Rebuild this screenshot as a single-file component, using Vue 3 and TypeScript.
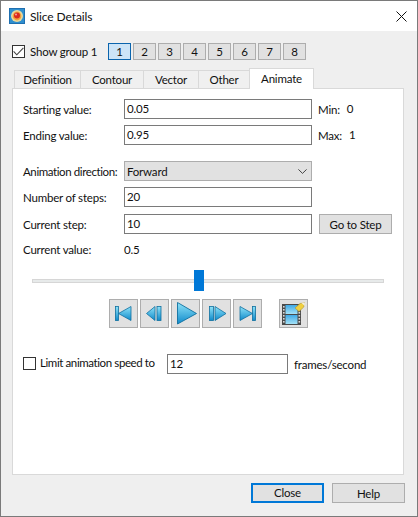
<script setup lang="ts">
const groups: number[] = [1, 2, 3, 4, 5, 6, 7, 8]
const tabs: string[] = ['Definition', 'Contour', 'Vector', 'Other', 'Animate']
</script>

<template>
  <div class="window">
    <div class="titlebar">
      <svg class="app-icon" width="16" height="16" viewBox="0 0 16 16">
        <rect width="16" height="16" fill="#1f6fb0" />
        <rect x="1" y="1" width="14" height="14" fill="#2f8fcf" />
        <circle cx="8" cy="8" r="6" fill="#e8d9a0" />
        <circle cx="8" cy="8" r="4.4" fill="#f2a13a" />
        <circle cx="8" cy="7.6" r="3" fill="#d8281f" />
        <circle cx="7" cy="6.6" r="1" fill="#f6a6a0" />
      </svg>
      <span class="title">Slice Details</span>
      <svg class="close-x" width="11" height="11" viewBox="0 0 11 11">
        <path d="M0.5 0.5 L10.5 10.5 M10.5 0.5 L0.5 10.5" stroke="#111" stroke-width="1" fill="none" />
      </svg>
    </div>

    <div class="group-row">
      <span class="check">
        <svg width="11" height="9" viewBox="0 0 11 9">
          <path d="M0.6 4.4 L3.8 7.8 L10.4 0.8" stroke="#444" stroke-width="1.1" fill="none" />
        </svg>
      </span>
      <span class="show-label">Show group 1</span>
      <div class="group-buttons">
        <button v-for="g in groups" :key="g" class="group-btn" :class="{ active: g === 1 }">{{ g }}</button>
      </div>
    </div>

    <div class="tabs">
      <div v-for="t in tabs" :key="t" class="tab" :class="['tab-' + t.toLowerCase(), { selected: t === 'Animate' }]">{{ t }}</div>
    </div>

    <div class="panel">
      <div class="row">
        <span class="label">Starting value:</span>
        <div class="input wide">0.05</div>
        <span class="side">Min:</span><span class="side-val">0</span>
      </div>
      <div class="row gap6">
        <span class="label">Ending value:</span>
        <div class="input wide">0.95</div>
        <span class="side">Max:</span><span class="side-val">1</span>
      </div>
      <div class="row gap16">
        <span class="label tight">Animation direction:</span>
        <div class="select wide">
          <span>Forward</span>
          <svg width="9" height="5" viewBox="0 0 9 5">
            <path d="M0.4 0.4 L4.5 4.4 L8.6 0.4" stroke="#444" stroke-width="1" fill="none" />
          </svg>
        </div>
      </div>
      <div class="row gap6">
        <span class="label">Number of steps:</span>
        <div class="input wide">20</div>
      </div>
      <div class="row gap7">
        <span class="label">Current step:</span>
        <div class="input wide">10</div>
        <button class="btn goto">Go to Step</button>
      </div>
      <div class="row value-row">
        <span class="label">Current value:</span>
        <span>0.5</span>
      </div>

      <div class="slider">
        <div class="track"></div>
        <div class="thumb"></div>
      </div>

      <div class="media">
        <button class="media-btn">
          <svg width="27" height="27" viewBox="0 0 27 27">
            <rect x="5.5" y="6.5" width="3" height="14" fill="url(#mg)" stroke="#0f6f9f" stroke-width="0.8" />
            <path d="M8.5 13.5 L21 6.5 V20.5 Z" fill="url(#mg)" stroke="#0f6f9f" stroke-width="0.8" />
          </svg>
        </button>
        <button class="media-btn">
          <svg width="27" height="27" viewBox="0 0 27 27">
            <path d="M5.5 13.5 L14 6.5 V20.5 Z" fill="url(#mg)" stroke="#0f6f9f" stroke-width="0.8" />
            <rect x="16" y="6.5" width="4" height="14" fill="url(#mg)" stroke="#0f6f9f" stroke-width="0.8" />
          </svg>
        </button>
        <button class="media-btn">
          <svg width="27" height="27" viewBox="0 0 27 27">
            <path d="M5.5 2.5 L24.5 13.5 L5.5 24 Z" fill="url(#mg)" stroke="#0f6f9f" stroke-width="0.9" />
          </svg>
        </button>
        <button class="media-btn">
          <svg width="27" height="27" viewBox="0 0 27 27">
            <rect x="6.5" y="6.5" width="4" height="14" fill="url(#mg)" stroke="#0f6f9f" stroke-width="0.8" />
            <path d="M12 6.5 L23 13.5 L12 20.5 Z" fill="url(#mg)" stroke="#0f6f9f" stroke-width="0.8" />
          </svg>
        </button>
        <button class="media-btn">
          <svg width="27" height="27" viewBox="0 0 27 27">
            <path d="M6 6.5 L18.5 13.5 L6 20.5 Z" fill="url(#mg)" stroke="#0f6f9f" stroke-width="0.8" />
            <rect x="18.5" y="6.5" width="3" height="14" fill="url(#mg)" stroke="#0f6f9f" stroke-width="0.8" />
          </svg>
        </button>
        <button class="media-btn film">
          <svg width="27" height="27" viewBox="0 0 27 27">
            <rect x="2" y="4" width="19" height="21" fill="#4a4a4a" />
            <rect x="5.5" y="5" width="12" height="9" fill="url(#fg)" />
            <rect x="5.5" y="15" width="12" height="9" fill="url(#fg)" />
            <g fill="#d8d8d8">
              <rect x="3" y="6" width="1.6" height="1.6" />
              <rect x="3" y="9" width="1.6" height="1.6" />
              <rect x="3" y="12" width="1.6" height="1.6" />
              <rect x="3" y="15" width="1.6" height="1.6" />
              <rect x="3" y="18" width="1.6" height="1.6" />
              <rect x="3" y="21" width="1.6" height="1.6" />
              <rect x="18.5" y="6" width="1.6" height="1.6" />
              <rect x="18.5" y="9" width="1.6" height="1.6" />
              <rect x="18.5" y="12" width="1.6" height="1.6" />
              <rect x="18.5" y="15" width="1.6" height="1.6" />
              <rect x="18.5" y="18" width="1.6" height="1.6" />
              <rect x="18.5" y="21" width="1.6" height="1.6" />
            </g>
            <path d="M15 8 L20 3.5 L24.5 2.5 L23.8 7 L19 11.5 Z" fill="#f0d040" stroke="#a8943a" stroke-width="0.6" />
            <path d="M21 2.5 H24.8 V6 Z" fill="#f3efe0" />
          </svg>
        </button>
        <svg class="defs" width="0" height="0">
          <defs>
            <linearGradient id="mg" x1="0" y1="0" x2="0" y2="1">
              <stop offset="0" stop-color="#8fe3f8" />
              <stop offset="1" stop-color="#0f8acb" />
            </linearGradient>
            <linearGradient id="fg" x1="0" y1="0" x2="0" y2="1">
              <stop offset="0" stop-color="#3fa9e6" />
              <stop offset="1" stop-color="#a4e2f7" />
            </linearGradient>
          </defs>
        </svg>
      </div>

      <div class="limit-row">
        <span class="check small"></span>
        <span class="limit-label tight">Limit animation speed to</span>
        <div class="input fps">12</div>
        <span class="fps-label">frames/second</span>
      </div>
    </div>

    <div class="footer">
      <button class="btn dialog default">Close</button>
      <button class="btn dialog">Help</button>
    </div>
  </div>
</template>

<style>
html,
body {
  margin: 0;
  background: #f0f0f0;
}
</style>

<style scoped>
.window {
  box-sizing: border-box;
  width: 418px;
  height: 517px;
  border: 1px solid #7a7a7a;
  background: #efefef;
  display: flex;
  flex-direction: column;
  font-family: "Lato", "Open Sans", sans-serif;
  font-size: 11.5px;
  letter-spacing: -0.2px;
  color: #111;
}

button {
  font: inherit;
  letter-spacing: inherit;
  color: inherit;
  padding: 0;
  margin: 0;
  box-sizing: border-box;
}

.tight {
  letter-spacing: -0.4px;
}

.titlebar {
  height: 30px;
  flex: none;
  background: #fff;
  display: flex;
  align-items: center;
  padding: 0 10px 0 8px;
}

.title {
  margin-left: 5px;
  font-size: 12px;
  letter-spacing: -0.1px;
}

.close-x {
  margin-left: auto;
}

.group-row {
  margin-top: 12px;
  height: 17px;
  flex: none;
  display: flex;
  align-items: center;
  padding-left: 11px;
}

.check {
  box-sizing: border-box;
  width: 13px;
  height: 13px;
  border: 1px solid #333;
  background: #fff;
  display: flex;
  align-items: center;
  justify-content: center;
  flex: none;
}

.show-label {
  margin-left: 5px;
  width: 78px;
  white-space: nowrap;
}

.group-buttons {
  display: flex;
  gap: 2px;
}

.group-btn {
  width: 23px;
  height: 17px;
  border: 1px solid #adadad;
  background: #e1e1e1;
  line-height: 15px;
}

.group-btn.active {
  border-color: #0a64ad;
  background: #cce4f7;
}

.tabs {
  margin-top: 8px;
  height: 20px;
  flex: none;
  padding-left: 13px;
  display: flex;
  align-items: flex-end;
  position: relative;
  z-index: 1;
}

.tab {
  box-sizing: border-box;
  height: 18px;
  border: 1px solid #d9d9d9;
  border-bottom: none;
  border-left: none;
  display: flex;
  align-items: center;
  justify-content: center;
  background: #f0f0f0;
  white-space: nowrap;
}

.tab-definition {
  width: 67px;
  border-left: 1px solid #d9d9d9;
}
.tab-contour {
  width: 63px;
}
.tab-vector {
  width: 55px;
}
.tab-other {
  width: 51px;
}
.tab-animate {
  width: 65px;
}

.tab.selected {
  height: 21px;
  margin-bottom: -1px;
  padding-bottom: 2px;
  background: #fff;
  border-left: 1px solid #d9d9d9;
  margin-left: -1px;
}

.panel {
  box-sizing: border-box;
  margin-left: 11px;
  width: 392px;
  height: 387px;
  flex: none;
  background: #fff;
  border: 1px solid #d9d9d9;
  padding: 10px 0 0 10px;
}

.row {
  display: flex;
  align-items: center;
  height: 20px;
}

.gap6 {
  margin-top: 6px;
}
.gap7 {
  margin-top: 7px;
}
.gap16 {
  margin-top: 16px;
}

.label {
  width: 101px;
  flex: none;
  white-space: nowrap;
}

.input {
  box-sizing: border-box;
  height: 20px;
  border: 1px solid #7a7a7a;
  background: #fff;
  padding-left: 2px;
  line-height: 18px;
  flex: none;
}

.wide {
  width: 188px;
}

.select {
  box-sizing: border-box;
  height: 20px;
  border: 1px solid #adadad;
  background: #e1e1e1;
  padding: 0 4px 0 2px;
  display: flex;
  align-items: center;
  justify-content: space-between;
  flex: none;
}

.side {
  margin-left: 6px;
  margin-right: 7px;
}

.side-val {
  margin-top: -2px;
}

.btn {
  border: 1px solid #adadad;
  background: #e1e1e1;
}

.goto {
  margin-left: 7px;
  width: 73px;
  height: 20px;
}

.value-row {
  margin-top: 6px;
  height: 18px;
}

.slider {
  position: relative;
  margin: 12px 0 0 9px;
  width: 352px;
  height: 21px;
  display: flex;
  align-items: center;
}

.track {
  width: 100%;
  height: 4px;
  box-sizing: border-box;
  background: #e7eaea;
  border: 1px solid #d6d6d6;
}

.thumb {
  position: absolute;
  left: 162px;
  top: 0;
  width: 10px;
  height: 21px;
  background: #0078d7;
}

.media {
  margin: 8px 0 0 86px;
  display: flex;
  gap: 2px;
  height: 29px;
}

.media-btn {
  width: 29px;
  height: 29px;
  border: 1px solid #adadad;
  background: #e1e1e1;
  display: flex;
}

.film {
  margin-left: 15px;
}

.defs {
  position: absolute;
}

.limit-row {
  margin-top: 26px;
  height: 20px;
  display: flex;
  align-items: center;
}

.check.small {
  margin-top: -1px;
}

.limit-label {
  margin-left: 4px;
  width: 127px;
  margin-top: -3px;
  white-space: nowrap;
}

.fps {
  width: 121px;
}

.fps-label {
  margin-left: 6px;
}

.footer {
  margin-top: 8px;
  padding-left: 250px;
  display: flex;
  gap: 8px;
}

.dialog {
  width: 73px;
  height: 20px;
}

.default {
  border: 2px solid #0078d7;
  line-height: 16px;
}
</style>
